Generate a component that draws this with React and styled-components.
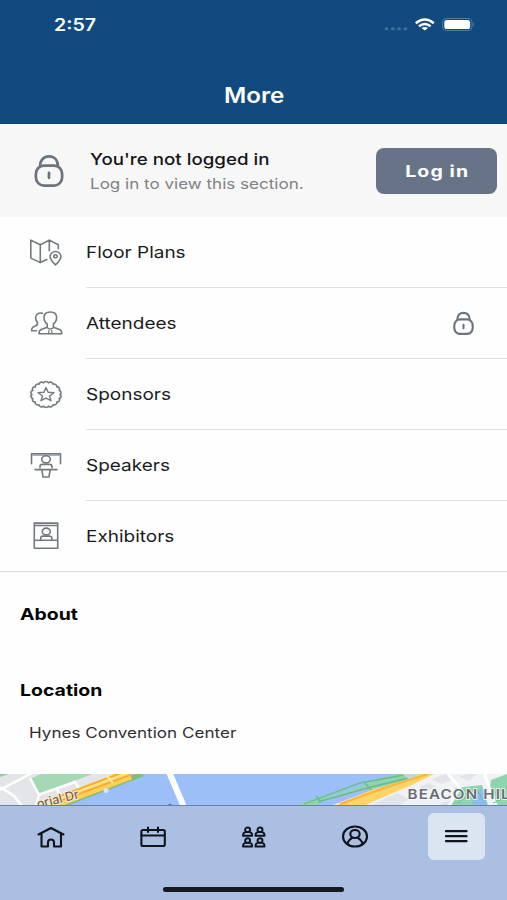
import styled, { createGlobalStyle } from "styled-components";

const GlobalStyle = createGlobalStyle`
  * {
    box-sizing: border-box;
  }

  body {
    margin: 0;
    background-color: #ffffff;
    font-family: Inter, "Liberation Sans", sans-serif;
  }
`;

const Screen = styled.div`
  display: flex;
  flex-direction: column;
  width: 507px;
  height: 900px;
  overflow: hidden;
  background-color: #fefefe;
`;

/* wide lettering, stretched sideways from its left edge */
const Wide = styled.span`
  display: inline-block;
  white-space: nowrap;
  transform: scaleX(${(props) => props.$x || 1.18});
  transform-origin: ${(props) => props.$origin || "left"} center;
`;

const Header = styled.header`
  display: flex;
  flex-direction: column;
  height: 124px;
  flex-shrink: 0;
  background-color: #114a7e;
  border-bottom: 1px solid #0c4375;
  color: #ffffff;
`;

const StatusBar = styled.div`
  display: flex;
  align-items: center;
  justify-content: space-between;
  height: 49px;
  padding: 0 31px 0 54px;
`;

const Clock = styled.span`
  font-size: 17px;
  font-weight: 600;
`;

const Signals = styled.div`
  display: flex;
  align-items: center;
  padding-bottom: 1px;
`;

const Title = styled.h1`
  margin: 33px 0 0;
  padding-left: 2px;
  text-align: center;
  font-size: 21px;
  font-weight: 600;
  line-height: 28px;
`;

const LoginBanner = styled.section`
  display: flex;
  align-items: center;
  height: 93px;
  flex-shrink: 0;
  padding: 0 10px 0 34px;
  background-color: #f7f7f7;
`;

const BannerText = styled.div`
  display: flex;
  flex-direction: column;
  flex: 1;
  margin-left: 26px;
  padding-top: 2px;
`;

const BannerTitle = styled.p`
  margin: 0;
  color: #151517;
  font-size: 16.5px;
  font-weight: 450;
  line-height: 24px;
`;

const BannerHint = styled.p`
  margin: 0;
  color: #808286;
  font-size: 14.5px;
  line-height: 25px;
`;

const LoginButton = styled.button`
  width: 121px;
  height: 46px;
  padding: 0 0 0 2px;
  border: none;
  border-radius: 8px;
  background-color: #677487;
  color: #ffffff;
  font-family: inherit;
  font-size: 16px;
  font-weight: 700;
  letter-spacing: 0.9px;
`;

const List = styled.ul`
  margin: 0;
  padding: 0;
  list-style: none;
  border-bottom: 1px solid #dcdcdd;
`;

const Row = styled.li`
  display: flex;
  align-items: center;
  height: ${(props) => (props.$last ? 70 : 71)}px;
  padding-left: 29px;
`;

const RowBody = styled.div`
  display: flex;
  align-items: center;
  justify-content: space-between;
  flex: 1;
  height: 100%;
  margin-left: 23px;
  padding-right: 33px;
  border-bottom: ${(props) => (props.$last ? "none" : "1px solid #e0e0e2")};
  color: #1b1b1d;
  font-size: 16.5px;
`;

const Info = styled.section`
  height: 202px;
  flex-shrink: 0;
  padding: 30px 20px 0;
`;

const Heading = styled.h2`
  margin: 0 0 ${(props) => props.$gap || 0}px;
  color: #050505;
  font-size: 16.5px;
  font-weight: 700;
  line-height: 24px;
`;

const Place = styled.p`
  margin: 0;
  padding-left: 9px;
  color: #303032;
  font-size: 14.5px;
  line-height: 24px;
`;

const MapSvg = styled.svg`
  display: block;
  flex-shrink: 0;
`;

const TabBar = styled.nav`
  display: flex;
  flex-direction: column;
  align-items: center;
  flex: 1;
  border-top: 1px solid #6980a8;
  background-color: #aabfe1;
`;

const Tabs = styled.div`
  display: grid;
  grid-template-columns: repeat(5, 1fr);
  justify-items: center;
  width: 100%;
  padding-top: 7px;
`;

const Tab = styled.a`
  display: flex;
  align-items: center;
  justify-content: center;
  width: 57px;
  height: 47px;
  border-radius: 6px;
  background-color: ${(props) => (props.$active ? "#dbe5f2" : "transparent")};
`;

const HomeIndicator = styled.div`
  width: 181px;
  height: 5px;
  margin-top: 27px;
  border-radius: 3px;
  background-color: #15181c;
`;

const Line = styled.svg`
  display: block;
  flex-shrink: 0;
  fill: none;
  stroke: ${(props) => props.$color || "#74797f"};
  stroke-width: ${(props) => props.$weight || 1.6};
  stroke-linecap: round;
  stroke-linejoin: round;
`;

const LockIcon = ({ width, height, weight }) => (
  <Line width={width} height={height} viewBox="0 0 32 34" $color="#6b737c" $weight={weight} preserveAspectRatio="none">
    <rect x="2" y="12" width="28" height="20.5" rx="8.5" />
    <path d="M6.500 12.500C6.500 6 10.500 2.500 16 2.500s9.500 3.500 9.500 10M16 19.500v5" />
  </Line>
);

const RowIcon = ({ children }) => (
  <Line width="34" height="30" viewBox="0 0.7 34 30">
    {children}
  </Line>
);

const FloorPlansIcon = () => (
  <RowIcon>
    <path d="M17.8 22.3L11.3 25.3L1.8 20.8V2.8L11.3 7.4L20.3 2.8L29.3 7.4V11.5M11.3 7.4V25.3M20.3 2.8V13.5" />
    <path d="M26.5 27.6c-3.4-3.2-5.4-5.8-5.4-8.4a5.4 5 0 0 1 10.8 0c0 2.6-2 5.2-5.4 8.4z" />
    <ellipse cx="26.5" cy="19" rx="1.8" ry="1.5" />
  </RowIcon>
);

const AttendeesIcon = () => (
  <RowIcon>
    <path d="M18.2 15.7C15.8 14 15 11.5 15 9.2C15 5.8 17.5 3.7 21.3 3.7S27.6 5.8 27.6 9.2c0 2.3-.8 4.8-3.2 6.5v3.3l6.2 2.2c1.9.7 2.2 2 2.2 4.3H10c0-2.3.3-3.6 2.2-4.3l6-2.2z" />
    <path d="M18.2 19.500q3.100 2.500 6.200 0M20 22l-.5 3.300M22.600 22l.5 3.300" strokeWidth="1.2" />
    <path d="M13.5 5C9.8 4 6.6 6 6.6 9.8c0 2 .8 3.200 1.900 4.400.2 2-.5 2.900-2.200 3.600C3.500 19 2.600 19.500 2.600 22.500H7.500" />
  </RowIcon>
);

// wavy rim of the badge: small arcs around an ellipse
const rim = Array.from({ length: 19 }, (_, i) => {
  const angle = (i * Math.PI * 2) / 18;
  const x = (17 + 14 * Math.cos(angle)).toFixed(2);
  const y = (15.2 + 11.9 * Math.sin(angle)).toFixed(2);
  return i === 0 ? `M${x} ${y}` : `A2.7 2.3 0 0 1 ${x} ${y}`;
}).join("");

const SponsorsIcon = () => (
  <RowIcon>
    <path d={rim} />
    <path d="M17 8.300l2.100 4.600 5.900.500-4.500 3.300 1.500 4.700L17 18.900l-5 2.500 1.500-4.700L9 13.400l5.900-.5z" strokeWidth="1.4" />
  </RowIcon>
);

const SpeakersIcon = () => (
  <RowIcon>
    <path d="M2.500 13.500V3.400H31.500V13.500" />
    <path d="M4 4.800H30" strokeWidth="1" />
    <ellipse cx="17" cy="9" rx="4.300" ry="3.600" />
    <path d="M11 17.500v-1.200c0-1.500 1.200-2.200 2.500-2.200h7c1.300 0 2.500.7 2.500 2.200v1.200M6 19.300H28M12.800 19.500l1.300 7.200h5.800l1.300-7.200" />
  </RowIcon>
);

const ExhibitorsIcon = () => (
  <RowIcon>
    <path d="M5.300 2.800H28.700V28H5.300ZM5.300 5.200H28.700M5.300 20H28.700" />
    <ellipse cx="17.300" cy="11.200" rx="4" ry="3.400" />
    <path d="M11.700 19.500v-1.500c0-1.500 1-2.200 2.500-2.200h6.200c1.500 0 2.500.7 2.500 2.200v1.500" />
  </RowIcon>
);

const TabIcon = ({ children }) => (
  <Line width="30" height="26" viewBox="0 0 30 26" $color="#10151b" $weight={2.1}>
    {children}
  </Line>
);

const Person = ({ x, y }) => (
  <g transform={`translate(${x} ${y})`} strokeWidth="1.900">
    <ellipse cx="0" cy="2.700" rx="2.500" ry="2.200" />
    <path d="M-4.600 8.700c0-2.200 1-3.400 2.600-3.600h4c1.600.2 2.600 1.400 2.600 3.600z" />
  </g>
);

const StatusIcons = () => (
  <svg width="92" height="18" viewBox="384 15 92 18">
    {[386.500, 392.800, 399, 405.300].map((x) => (
      <ellipse key={x} cx={x} cy="28.700" rx="1.900" ry="1.500" fill="#3e709d" />
    ))}
    <g fill="none" stroke="#ffffff" strokeWidth="2.500">
      <path d="M415.800 23.200Q424.800 15.800 433.800 23.200" />
      <path d="M419 26.300Q424.800 21.800 430.600 26.300" />
    </g>
    <path d="M421.500 28q3.300-2.200 6.600 0l-3.300 2.600z" fill="#ffffff" />
    <rect x="442.500" y="18.500" width="29.500" height="12" rx="4" fill="none" stroke="#4d79a3" strokeWidth="1.100" />
    <rect x="444.300" y="20" width="25.800" height="9" rx="2.600" fill="#ffffff" />
    <path d="M473.300 22.700q1.800 1.600 0 3.500z" fill="#6288ae" />
  </svg>
);

const LocationMap = () => (
  <MapSvg width="507" height="31" viewBox="0 774 507 31">
    <rect y="774" width="507" height="31" fill="#9dbff8" />
    {/* west bank */}
    <path d="M0 774H120L58 805H0Z" fill="#e3e5e9" />
    <path d="M0 774H9L0 777Z" fill="#8fcea9" />
    <path d="M30 779L41 774H93L38 794Z" fill="#a5d8b5" />
    <path d="M-2 791L34 772M30 778L39 795L36 806M0 787L14 796L22 806M38 795L75 782L80 790M57 789L62 799" fill="none" stroke="#ffffff" strokeWidth="2.500" />
    <path d="M62 805L143 774" stroke="#84bd75" strokeWidth="5" />
    <path d="M54 803L130 774" stroke="#ffcf55" strokeWidth="11" />
    <path d="M57 802L133 774M53 799L121 773" stroke="#f2a92f" strokeWidth="1.500" />
    <path d="M60 798L128 773" stroke="#ffe18a" strokeWidth="2" />
    <path d="M107 776l6 7" stroke="#ffe7a6" strokeWidth="2" />
    <circle cx="106" cy="790.500" r="2.500" fill="#d7e5f7" />
    <path d="M169.500 773L183.500 806" stroke="#ffffff" strokeWidth="6" />
    <path d="M168 805q2-3 4 0z" fill="#557bb7" />
    {/* east bank */}
    <path d="M333 805L375 789L434 774H507V805Z" fill="#f1f2f5" />
    <path d="M432 779l14-5 10 4-14 6zM459 777l9-3h9l-8 7zM419 787l10-4 7 4-10 4zM375 803l22-10 12 6-9 6h-26zM441 803l24-7 6 9h-30z" fill="#e1e4e9" />
    <path d="M296 805L352 785L398 774H421L415 779L375 788L322 801L318 805Z" fill="#8ed5ad" />
    <path d="M327 798L367 787L371 790L330 802ZM322 795L366 782L364 785L324 797Z" fill="#9dbff8" />
    <path d="M304 804L360 783L409 774M318 802L371 787L413 777M365 783l7 8M316 796l5 6" fill="none" stroke="#69bb8f" strokeWidth="1.300" />
    <path d="M402 774h20l-11 7z" fill="#b8dad8" />
    <path d="M337 805L371 790L409 779L421 774H434L414 784L372 802L366 805Z" fill="#ffd365" />
    <path d="M340 804L390 786L428 774" fill="none" stroke="#f6b63f" strokeWidth="2" />
    <path d="M455 788L482 785L488 805H451Z" fill="#8ed5ad" />
    <path d="M472 805l2-11 8-5 5 16z" fill="#8bbcf0" />
    <path d="M491 780L507 774V805H496L489 794Z" fill="#8ed5ad" />
    <path d="M484 773L496 806M448 774L460 788L449 806" fill="none" stroke="#ffffff" strokeWidth="3" />
    <path d="M457 803l20-13 6 10M493 794l14-6M493 803l14-6" fill="none" stroke="#6bbd8f" strokeWidth="1" />
    <text transform="translate(38 808.500) rotate(-14)" fontFamily="Inter, sans-serif" fontSize="12.500" fontWeight="500" fill="#80603f" stroke="#f8efdd" strokeWidth="2" paintOrder="stroke" textLength="43" lengthAdjust="spacingAndGlyphs">
      orial Dr
    </text>
    <text x="407.500" y="799" fontFamily="Inter, sans-serif" fontSize="13" fontWeight="600" letterSpacing="1" fill="#686d74" stroke="#f7f8f9" strokeWidth="1.500" paintOrder="stroke" textLength="113" lengthAdjust="spacingAndGlyphs">
      BEACON HILL
    </text>
  </MapSvg>
);

const items = [
  { label: "Floor Plans", Icon: FloorPlansIcon },
  { label: "Attendees", Icon: AttendeesIcon, locked: true },
  { label: "Sponsors", Icon: SponsorsIcon },
  { label: "Speakers", Icon: SpeakersIcon },
  { label: "Exhibitors", Icon: ExhibitorsIcon },
];

export default function App() {
  return (
    <>
      <GlobalStyle />
      <Screen>
        <Header>
          <StatusBar>
            <Clock>
              <Wide $x={1.15}>2:57</Wide>
            </Clock>
            <Signals>
              <StatusIcons />
            </Signals>
          </StatusBar>
          <Title>
            <Wide $x={1.15} $origin="center">More</Wide>
          </Title>
        </Header>

        <LoginBanner>
          <LockIcon width={30} height={33} weight={2.900} />
          <BannerText>
            <BannerTitle>
              <Wide $x={1.135}>You're not logged in</Wide>
            </BannerTitle>
            <BannerHint>
              <Wide $x={1.175}>Log in to view this section.</Wide>
            </BannerHint>
          </BannerText>
          <LoginButton>
            <Wide $x={1.220} $origin="center">Log in</Wide>
          </LoginButton>
        </LoginBanner>

        <List>
          {items.map(({ label, Icon, locked }, index) => {
            const last = index === items.length - 1;
            return (
              <Row key={label} $last={last}>
                <Icon />
                <RowBody $last={last}>
                  <Wide $x={1.15}>{label}</Wide>
                  {locked && <LockIcon width={21} height={24} weight={3.200} />}
                </RowBody>
              </Row>
            );
          })}
        </List>

        <Info>
          <Heading $gap={52}>
            <Wide $x={1.18}>About</Wide>
          </Heading>
          <Heading $gap={19}>
            <Wide $x={1.18}>Location</Wide>
          </Heading>
          <Place>
            <Wide $x={1.178}>Hynes Convention Center</Wide>
          </Place>
        </Info>

        <LocationMap />

        <TabBar>
          <Tabs>
            <Tab>
              <TabIcon>
                <path d="M2.500 10.500L15 4L27.500 10.500M5.500 9.500V22.500H12V18.500C12 16.500 13 15.500 15 15.500S18 16.500 18 18.500V22.500H25V9.500" />
              </TabIcon>
            </Tab>
            <Tab>
              <TabIcon>
                <rect x="4.400" y="6" width="23.400" height="16" rx="1.500" />
                <path d="M4.400 11.500H27.800M11 3.500V8M21 3.500V8" />
              </TabIcon>
            </Tab>
            <Tab>
              <TabIcon>
                <Person x={9.600} y={3} />
                <Person x={22} y={3} />
                <Person x={9.600} y={13.800} />
                <Person x={22} y={13.800} />
              </TabIcon>
            </Tab>
            <Tab>
              <TabIcon>
                <ellipse cx="15" cy="12.500" rx="12" ry="10" />
                <ellipse cx="15" cy="10" rx="4.700" ry="4" />
                <path d="M7.300 20C8.300 16.500 10.800 14.500 12.500 13.600M22.700 20C21.700 16.500 19.200 14.500 17.500 13.600" />
              </TabIcon>
            </Tab>
            <Tab $active>
              <TabIcon>
                <path d="M5 7.200H25.500M5 12.200H25.500M5 17.200H25.500" strokeWidth="2.300" />
              </TabIcon>
            </Tab>
          </Tabs>
          <HomeIndicator />
        </TabBar>
      </Screen>
    </>
  );
}
